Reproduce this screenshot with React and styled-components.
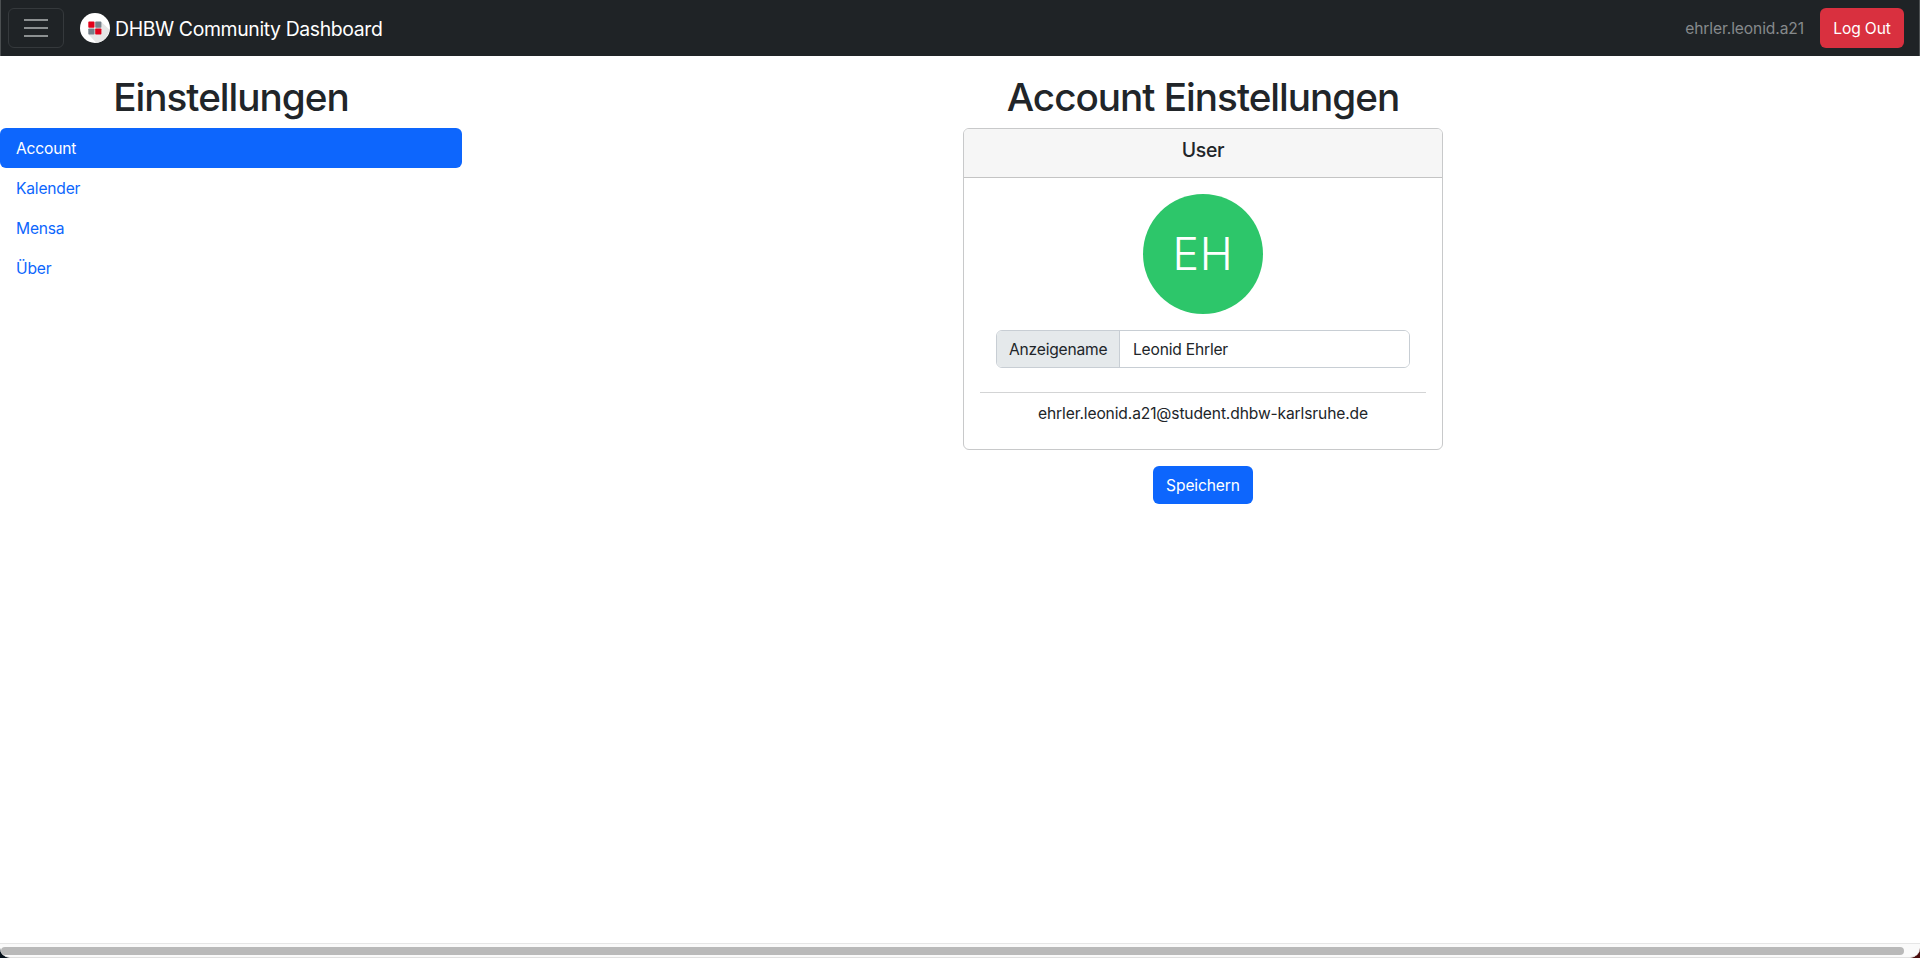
import React from 'react';
import styled, { createGlobalStyle } from 'styled-components';

const GlobalStyle = createGlobalStyle`
  * { box-sizing: border-box; }
  html, body { margin: 0; overflow: hidden; }
  body {
    background: #fff;
    color: #212529;
    font: 400 15.6px/24px Inter, "Liberation Sans", sans-serif;
    letter-spacing: -0.13px;
  }
  h1, h5, p { margin: 0; font-weight: 500; }
`;

const Page = styled.div`
  display: flex;
  flex-direction: column;
  height: 958px;
`;

const Navbar = styled.nav`
  display: flex;
  align-items: center;
  height: 56px;
  padding: 0 15px 0 7px;
  background: #1f2326;
  border: solid #4b4f51;
  border-width: 0 1px;
`;

const Toggler = styled.button`
  display: flex;
  flex-direction: column;
  align-items: center;
  justify-content: center;
  gap: 6px;
  width: 56px;
  height: 40px;
  padding: 0;
  background: none;
  border: 1px solid #35393c;
  border-radius: 6px;
`;

const TogglerBar = styled.span`
  width: 24px;
  height: 2px;
  background: #8c9091;
`;

const Brand = styled.div`
  display: flex;
  align-items: center;
  gap: 5px;
  margin-left: 16px;
  color: #fff;
  font-size: 19.4px;
  line-height: 30px;
  letter-spacing: -0.36px;
`;

const BrandName = styled.span`
  padding-top: 2px;
`;

const Logo = styled.svg`
  display: block;
  width: 30px;
  height: 30px;
`;

const UserName = styled.span`
  margin-left: auto;
  margin-right: 16px;
  padding-top: 2px;
  color: #868a8c;
  letter-spacing: -0.1px;
`;

const Button = styled.button`
  width: ${(p) => p.$width}px;
  height: ${(p) => p.$height}px;
  padding: 2px 0 0;
  border: 0;
  border-radius: 6px;
  background: ${(p) => p.$color};
  color: #fff;
  font: inherit;
  letter-spacing: inherit;
  text-align: center;
`;

const Main = styled.main`
  display: grid;
  grid-template-columns: 462px 1434px;
  column-gap: 24px;
  align-items: start;
  flex: 1;
  padding-top: 17px;
`;

const Title = styled.h1`
  margin-bottom: 7px;
  font-size: 38.7px;
  line-height: 48px;
  letter-spacing: -1.02px;
  text-align: center;
`;

const Pills = styled.div`
  display: flex;
  flex-direction: column;
`;

const Pill = styled.a`
  padding: 9px 16px 7px;
  border-radius: 6px;
  background: ${(p) => (p.$active ? '#0d66fd' : 'transparent')};
  color: ${(p) => (p.$active ? '#fff' : '#0d66fd')};
  letter-spacing: -0.2px;
`;

const Content = styled.section`
  display: flex;
  flex-direction: column;
  align-items: center;
`;

const Card = styled.div`
  width: 480px;
  height: 322px;
  margin-bottom: 16px;
  border: 1px solid #c8c9ca;
  border-radius: 6px;
  overflow: hidden;
`;

const CardHeader = styled.div`
  height: 49px;
  padding-top: 9px;
  background: #f6f6f6;
  border-bottom: 1px solid #c4c4c4;
  text-align: center;
`;

const CardTitle = styled.h5`
  font-size: 19.4px;
  line-height: 24px;
  letter-spacing: -0.3px;
`;

const CardBody = styled.div`
  display: flex;
  flex-direction: column;
  align-items: center;
  padding: 16px;
`;

const Avatar = styled.div`
  display: flex;
  align-items: center;
  justify-content: center;
  width: 120px;
  height: 120px;
  padding-bottom: 1px;
  border-radius: 50%;
  background: #2dc66a;
  color: #fff;
  font-size: 44.5px;
  font-weight: 340;
  letter-spacing: 0.8px;
`;

const InputGroup = styled.div`
  display: flex;
  width: 414px;
  height: 38px;
  margin: 16px 0 24px;
  border: 1px solid #c8ced4;
  border-radius: 6px;
  overflow: hidden;
`;

const InputLabel = styled.label`
  width: 123px;
  padding: 7px 0 5px 12px;
  background: #e5e9eb;
  border-right: 1px solid #c8ced4;
  letter-spacing: -0.2px;
`;

const Input = styled.input`
  flex: 1;
  min-width: 0;
  padding: 2px 12px 0 13px;
  border: 0;
  background: #fff;
  color: inherit;
  font: inherit;
  letter-spacing: -0.2px;
`;

const Mail = styled.p`
  width: 100%;
  padding-top: 9px;
  border-top: 1px solid #d3d4d5;
  font-weight: 400;
  text-align: center;
`;

const ScrollTrack = styled.div`
  height: 15px;
  padding-top: 3px;
  background: linear-gradient(to right, #05101a 50%, #4a0d0d 50%);
  position: relative;
`;

const ScrollSurface = styled.div`
  position: absolute;
  inset: 0;
  background: #fafafa;
  border-top: 1px solid #e6e6e6;
  border-bottom: 1px solid #e0e0e0;
  border-radius: 0 0 10px 10px;
`;

const ScrollThumb = styled.div`
  position: relative;
  width: 1903px;
  height: 8px;
  margin: 1px 0 0 1px;
  border-radius: 4px;
  background: #b9b9b9;
`;

const sections = ['Account', 'Kalender', 'Mensa', 'Über'];

export default function App() {
  return (
    <Page>
      <GlobalStyle />
      <Navbar>
        <Toggler aria-label="Menu">
          <TogglerBar />
          <TogglerBar />
          <TogglerBar />
        </Toggler>
        <Brand>
          <Logo viewBox="0 0 30 30">
            <circle cx="15" cy="15" r="15" fill="#fff" />
            <path d="M21.5 9 L29.3 16.5 A15 15 0 0 1 16.5 29.9 L8.5 21.5 Z" fill="#e6e6e6" />
            <rect x="8.3" y="8.6" width="6.2" height="6.2" rx="0.8" fill="#e2001a" />
            <rect x="15.2" y="8.6" width="6.2" height="6.2" rx="0.8" fill="#76818a" />
            <rect x="8.3" y="15.4" width="6.2" height="6.2" rx="0.8" fill="#76818a" />
            <rect x="15.2" y="15.4" width="6.2" height="6.2" rx="0.8" fill="#e2001a" />
          </Logo>
          <BrandName>DHBW Community Dashboard</BrandName>
        </Brand>
        <UserName>ehrler.leonid.a21</UserName>
        <Button $width={84} $height={40} $color="#d9303f">Log Out</Button>
      </Navbar>
      <Main>
        <section>
          <Title>Einstellungen</Title>
          <Pills>
            {sections.map((name, i) => (
              <Pill key={name} $active={i === 0}>{name}</Pill>
            ))}
          </Pills>
        </section>
        <Content>
          <Title>Account Einstellungen</Title>
          <Card>
            <CardHeader>
              <CardTitle>User</CardTitle>
            </CardHeader>
            <CardBody>
              <Avatar>EH</Avatar>
              <InputGroup>
                <InputLabel htmlFor="display-name">Anzeigename</InputLabel>
                <Input id="display-name" defaultValue="Leonid Ehrler" />
              </InputGroup>
              <Mail>ehrler.leonid.a21@student.dhbw-karlsruhe.de</Mail>
            </CardBody>
          </Card>
          <Button $width={100} $height={38} $color="#0d66fd">Speichern</Button>
        </Content>
      </Main>
      <ScrollTrack>
        <ScrollSurface />
        <ScrollThumb />
      </ScrollTrack>
    </Page>
  );
}
